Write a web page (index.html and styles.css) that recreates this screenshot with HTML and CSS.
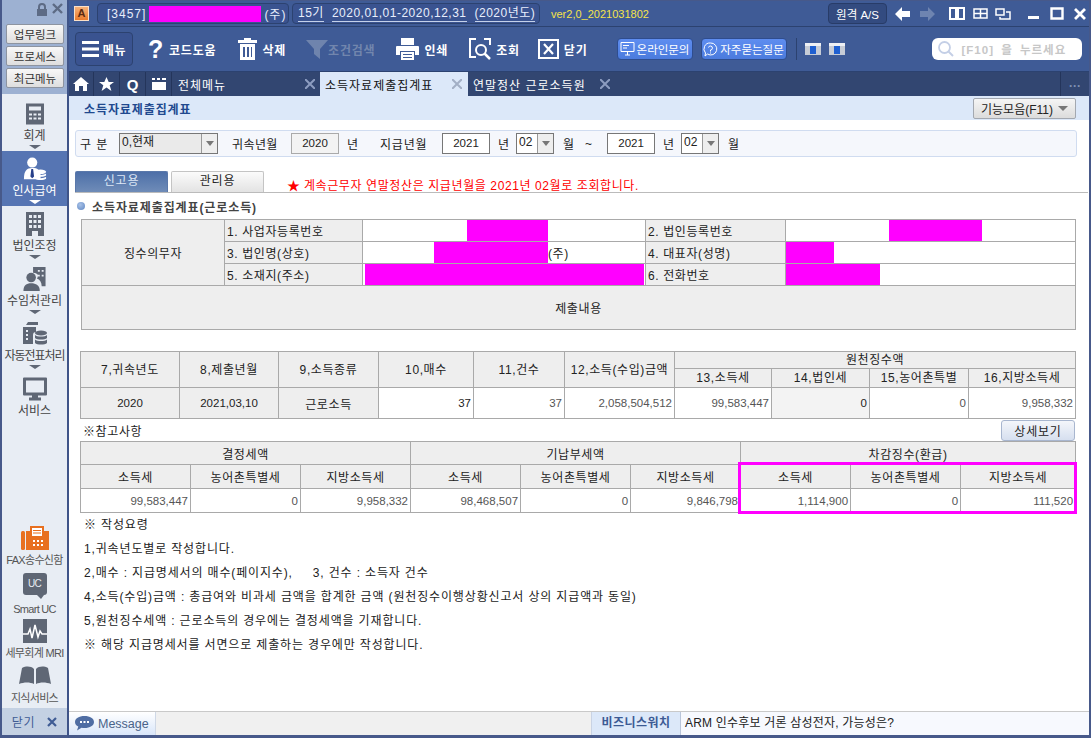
FILE: index.html
```html
<!DOCTYPE html>
<html lang="ko">
<head>
<meta charset="utf-8">
<title>소득자료제출집계표</title>
<link rel="stylesheet" href="styles.css">
</head>
<body>
<div class="app">
  <aside class="side">
    <div class="side-top">
      <div class="lockrow">
        <svg width="12" height="13" viewBox="0 0 12 13"><path d="M3 6V4a3 3 0 0 1 6 0v2" fill="none" stroke="#5d6b85" stroke-width="2"/><rect x="1" y="6" width="10" height="7" fill="#5d6b85"/></svg>
        <svg width="11" height="11" viewBox="0 0 11 11"><path d="M1 1l9 9M10 1l-9 9" stroke="#5d6b85" stroke-width="2.4"/></svg>
      </div>
      <button class="sbtn">업무링크</button>
      <button class="sbtn">프로세스</button>
      <button class="sbtn">최근메뉴</button>
    </div>
    <nav class="snav">
      <div class="sitem">
        <svg width="18" height="21" viewBox="0 0 18 21"><path fill="#5f6775" fill-rule="evenodd" d="M0 0h18v21H0zM3 3v4h12V3zM3 10v2h3v-2zm4.500 0v2h3v-2zm4.500 0v2h3v-2zM3 14v2h3v-2zm4.500 0v2h3v-2zm4.500 0v2h3v-2z"/></svg>
        <span>회계</span><i class="arr"></i>
      </div>
      <div class="sitem on">
        <svg width="24" height="26" viewBox="0 0 24 26"><circle cx="9" cy="6" r="5.500" fill="#fff"/><path d="M0 24c0-9 3-12 9-12s8 2 9 6v6z" fill="#fff"/><path d="M8 13h2l1 8-2 2-2-2z" fill="#27408a"/><ellipse cx="18" cy="16" rx="6" ry="2.500" fill="#fff"/><path d="M12 18c2 2 10 2 12 0v2c-2 2-10 2-12 0zm0 3.500c2 2 10 2 12 0v2c-2 2-10 2-12 0z" fill="#fff"/></svg>
        <span>인사급여</span><i class="arr"></i>
      </div>
      <div class="sitem">
        <svg width="18" height="24" viewBox="0 0 18 24"><path fill="#5f6775" fill-rule="evenodd" d="M0 0h18v24h-6v-5H6v5H0zM3 3v3h3V3zm4.500 0v3h3V3zM12 3v3h3V3zM3 8v3h3V8zm4.500 0v3h3V8zM12 8v3h3V8zM3 13v3h3v-3zm4.500 0v3h3v-3zm4.500 0v3h3v-3z"/></svg>
        <span>법인조정</span><i class="arr"></i>
      </div>
      <div class="sitem">
        <svg width="23" height="25" viewBox="0 0 23 25"><path fill="#5f6775" fill-rule="evenodd" d="M10 0h13v20h-4c0-4-2-7-5-8 1-1 1-3 1-4-1-1-3-2-5-2zM15 3v2h2V3zm4 0v2h2V3zM15 8v2h2V8zm4 0v2h2V8z"/><circle cx="8" cy="11" r="5" fill="#5f6775"/><path d="M0 25c0-6 3-8 8-8s9 2 9 8z" fill="#5f6775"/></svg>
        <span>수임처관리</span><i class="arr"></i>
      </div>
      <div class="sitem wide">
        <svg width="24" height="24" viewBox="0 0 24 24"><path fill="#5f6775" d="M3 3h12V0H5zM0 5h13v5c-2 0-3 1-3 3v9H0z"/><path fill="#e8edf4" d="M3 8h2v2H3zm0 4h2v2H3zm0 4h2v2H3z"/><ellipse cx="18" cy="11" rx="6" ry="2.500" fill="#5f6775"/><path fill="#5f6775" d="M12 13c2 2 10 2 12 0v3c-2 2-10 2-12 0zm0 4.500c2 2 10 2 12 0V21c-2 2-10 2-12 0z"/></svg>
        <span>자동전표처리</span><i class="arr"></i>
      </div>
      <div class="sitem">
        <svg width="24" height="23" viewBox="0 0 24 23"><path fill="#5f6775" fill-rule="evenodd" d="M1 0h22a1 1 0 0 1 1 1v16a1 1 0 0 1-1 1h-8v2h3v3H6v-3h3v-2H1a1 1 0 0 1-1-1V1a1 1 0 0 1 1-1zm2 3v12h18V3z"/></svg>
        <span>서비스</span>
      </div>
    </nav>
    <div class="sbottom">
      <div class="bitem fax">
        <svg width="28" height="24" viewBox="0 0 28 24"><rect y="5" width="4" height="19" rx="1.500" fill="#e8701f"/><path fill="#e8701f" d="M5 5h4V0h14v5h5v19H5z"/><path fill="#fff" d="M11 2h10v8H11zM12 14h2v2h-2zm4 0h2v2h-2zm4 0h2v2h-2zM12 18h2v2h-2zm4 0h2v2h-2zm4 0h2v2h-2z"/><path stroke="#e8701f" d="M12 4.500h8M12 7h8"/></svg>
        <span>FAX송수신함</span>
      </div>
      <div class="bitem uc">
        <div class="ucbox">UC</div>
        <span>Smart UC</span>
      </div>
      <div class="bitem mri">
        <svg width="24" height="24" viewBox="0 0 24 24"><rect width="24" height="24" fill="#5f6775"/><path d="M0 15h5l2-5 2 9 3-13 3 12 2-6 2 3h5" fill="none" stroke="#fff" stroke-width="1.500"/></svg>
        <span>세무회계 MRI</span>
      </div>
      <div class="bitem book">
        <svg width="32" height="18" viewBox="0 0 32 18"><path fill="#5f6775" d="M3 2c4-2 9-2 12 1v15c-4-2-10-2-15 0zM29 2c-4-2-9-2-12 1v15c4-2 10-2 15 0z"/></svg>
        <span>지식서비스</span>
      </div>
    </div>
    <div class="sclose"><span>닫기</span><svg width="10" height="10" viewBox="0 0 10 10"><path d="M1 1l8 8M9 1l-8 8" stroke="#3f5c94" stroke-width="2.200"/></svg></div>
  </aside>

  <main class="win">
    <header class="titlebar">
      <div class="logo">A</div>
      <div class="pill company"><span>[3457]</span><i class="mask m-co"></i><span>(주)</span></div>
      <div class="pill period"><span>15기</span><span>2020,01,01-2020,12,31</span><span>(2020년도)</span></div>
      <span class="ver">ver2,0_2021031802</span>
      <div class="tright">
        <button class="as">원격 A/S</button>
        <svg class="wi w-back" width="15" height="14" viewBox="0 0 15 14"><path fill="#fff" d="M0 7l7-7v4h8v6H7v4z"/></svg>
        <svg class="wi w-next" width="15" height="14" viewBox="0 0 15 14"><path fill="#6e84b0" d="M15 7L8 0v4H0v6h8v4z"/></svg>
        <svg class="wi w-book" width="16" height="13" viewBox="0 0 16 13"><path fill="none" stroke="#fff" stroke-width="2" d="M1 1h6v11H1zM9 1h6v11H9z"/></svg>
        <svg class="wi w-grid" width="15" height="11" viewBox="0 0 15 11"><path fill="none" stroke="#fff" stroke-width="1.500" d="M1 1h13v9H1zM1 5.500h13M7.500 1v9"/></svg>
        <svg class="wi w-rect" width="16" height="12" viewBox="0 0 16 12"><path fill="none" stroke="#fff" stroke-width="1.500" d="M1 1h8v6H1zM11 4h4v7H5V9"/></svg>
        <svg class="wi w-min" width="13" height="13" viewBox="0 0 13 13"><path fill="#fff" d="M1 9h11v3H1z"/></svg>
        <svg class="wi w-max" width="14" height="13" viewBox="0 0 14 13"><path fill="none" stroke="#fff" stroke-width="2.400" d="M1.500 1.500h11v10h-11z"/></svg>
        <svg class="wi w-x" width="12" height="12" viewBox="0 0 12 12"><path stroke="#fff" stroke-width="2.800" d="M1 1l10 10M11 1L1 11"/></svg>
      </div>
    </header>

    <div class="toolbar">
      <button class="tmenu">
        <svg width="17" height="16" viewBox="0 0 17 16"><path fill="#fff" d="M0 0h17v3H0zM0 6.500h17v3H0zM0 13h17v3H0z"/></svg>
        <b>메뉴</b>
      </button>
      <div class="ti t-code"><span class="q">?</span><b>코드도움</b></div>
      <div class="ti t-del">
        <svg width="19" height="22" viewBox="0 0 19 22"><path fill="#fff" fill-rule="evenodd" d="M6 0h7v2h6v3H0V2h6zM2 6h15v16H2zm3 3v10h2V9zm4 0v10h2V9zm4 0v10h1V9z"/></svg>
        <b>삭제</b>
      </div>
      <div class="ti t-find off">
        <svg width="22" height="19" viewBox="0 0 22 19"><path fill="#6f84ad" d="M0 0h22l-8 9v10l-6-5V9z"/></svg>
        <b>조건검색</b>
      </div>
      <div class="ti t-print">
        <svg width="23" height="22" viewBox="0 0 23 22"><path fill="#fff" fill-rule="evenodd" d="M5 0h13v7H5zM1 8h21a1 1 0 0 1 1 1v8h-4v-4H4v4H0V9a1 1 0 0 1 1-1zM5 14h13v8H5zm2 2v1h9v-1zm0 3v1h9v-1z"/></svg>
        <b>인쇄</b>
      </div>
      <div class="ti t-view">
        <svg width="22" height="22" viewBox="0 0 22 22"><path fill="none" stroke="#fff" stroke-width="2" d="M7 1H1v18h6M15 1h6v6"/><circle cx="12" cy="12" r="5" fill="none" stroke="#fff" stroke-width="2"/><path stroke="#fff" stroke-width="2.500" d="M15.500 15.500L21 21"/></svg>
        <b>조회</b>
      </div>
      <div class="ti t-close">
        <svg width="21" height="20" viewBox="0 0 21 20"><path fill="none" stroke="#fff" stroke-width="2" d="M1 1h19v18H1z"/><path stroke="#fff" stroke-width="2.200" d="M6 5l9 10M15 5L6 15"/></svg>
        <b>닫기</b>
      </div>
      <button class="bluebtn b-on">
        <svg width="15" height="14" viewBox="0 0 15 14"><path fill="none" stroke="#fff" d="M1 .5h13v9H1zM5 13h5M7.500 10v3M3 3.500h6M3 6h4"/></svg>온라인문의
      </button>
      <button class="bluebtn b-faq">
        <svg width="15" height="15" viewBox="0 0 15 15"><path fill="none" stroke="#fff" d="M7.500 1a6 6 0 1 1-3 11L2 14l.5-3a6 6 0 0 1 5-10z"/><path fill="none" stroke="#fff" d="M5.500 5.500a2 2 0 1 1 2 2.500v1.500M7.500 10.500v1"/></svg>자주묻는질문
      </button>
      <i class="vsep"></i>
      <div class="mini"><i></i></div>
      <div class="mini mini2"><i></i></div>
      <div class="search">
        <svg width="16" height="16" viewBox="0 0 16 16"><circle cx="6.500" cy="6.500" r="5.500" fill="none" stroke="#c4cfe6" stroke-width="1.800"/><path stroke="#c4cfe6" stroke-width="2" d="M10.500 10.500L15 15"/></svg>
        <span>[F10] 을 누르세요</span>
      </div>
    </div>

    <div class="tabbar">
      <div class="tico">
        <svg width="16" height="14" viewBox="0 0 16 14"><path fill="#fff" d="M8 0l8 7h-2v7h-4V9H6v5H2V7H0z"/></svg>
      </div>
      <div class="tico">
        <svg width="15" height="14" viewBox="0 0 15 14"><path fill="#fff" d="M7.500 0l2.200 5h5.300l-4.300 3.300 1.700 5.700-4.900-3.400L2.600 14l1.700-5.700L0 5h5.300z"/></svg>
      </div>
      <div class="tico q2">Q</div>
      <div class="tico">
        <svg width="14" height="12" viewBox="0 0 14 12"><path fill="#fff" d="M0 0h3v2H0zM5 0h3v2H5zM10 0h4v2h-4zM0 4h14v8H0z"/></svg>
      </div>
      <div class="tab t1"><span>전체메뉴</span><svg width="10" height="10" viewBox="0 0 10 10"><path stroke="#8c9cc0" stroke-width="2" d="M0 0l10 10M10 0L0 10"/></svg></div>
      <div class="tab t2"><span>소득자료제출집계표</span><svg width="10" height="10" viewBox="0 0 10 10"><path stroke="#a3afc5" stroke-width="2" d="M0 0l10 10M10 0L0 10"/></svg></div>
      <div class="tab t3"><span>연말정산 근로소득원</span><svg width="10" height="10" viewBox="0 0 10 10"><path stroke="#8c9cc0" stroke-width="2" d="M0 0l10 10M10 0L0 10"/></svg></div>
      <div class="tabmore">...</div>
    </div>

    <div class="pagehead">
      <h1>소득자료제출집계표</h1>
      <button class="fn">기능모음(F11)<i class="tri"></i></button>
    </div>

    <section class="body">
      <div class="filter">
        <span class="f-a">구 분</span>
        <div class="sel s-big grey"><span>0,현재</span><em><i class="tri"></i></em></div>
        <span class="f-b">귀속년월</span>
        <div class="inp grey">2020</div>
        <span class="f-c">년</span>
        <span class="f-d">지급년월</span>
        <div class="inp">2021</div>
        <span class="f-c">년</span>
        <div class="sel s-sm"><span>02</span><em><i class="tri"></i></em></div>
        <span class="f-e">월</span>
        <span class="f-f">~</span>
        <div class="inp i-2">2021</div>
        <span class="f-c">년</span>
        <div class="sel s-sm s-3"><span>02</span><em><i class="tri"></i></em></div>
        <span class="f-e">월</span>
      </div>

      <div class="subtabs">
        <div class="st act">신고용</div>
        <div class="st">관리용</div>
        <p class="notice"><span class="star">★</span> 계속근무자 연말정산은 지급년월을 2021년 02월로 조회합니다.</p>
      </div>

      <h2 class="sec"><i class="dot"></i>소득자료제출집계표(근로소득)</h2>

      <table class="grid info">
        <colgroup><col class="c143"><col class="c138"><col class="c283"><col class="c140"><col class="c290"></colgroup>
        <tr>
          <th rowspan="3" class="ctr">징수의무자</th>
          <th>1. 사업자등록번호</th><td><i class="mask m1"></i></td>
          <th>2. 법인등록번호</th><td><i class="mask m2"></i></td>
        </tr>
        <tr>
          <th>3. 법인명(상호)</th><td><div class="cellrow"><i class="mask m3"></i><span>(주)</span></div></td>
          <th>4. 대표자(성명)</th><td><i class="mask m4"></i></td>
        </tr>
        <tr>
          <th>5. 소재지(주소)</th><td><i class="mask m5"></i></td>
          <th>6. 전화번호</th><td><i class="mask m6"></i></td>
        </tr>
        <tr class="tall"><th colspan="5" class="ctr">제출내용</th></tr>
      </table>

      <table class="grid sum">
        <colgroup><col class="c99"><col class="c99"><col class="c100"><col class="c95"><col class="c91"><col class="c110"><col class="c97"><col class="c98"><col class="c99"><col class="c107"></colgroup>
        <tr class="r17">
          <th rowspan="2" class="ctr">7,귀속년도</th>
          <th rowspan="2" class="ctr">8,제출년월</th>
          <th rowspan="2" class="ctr">9,소득종류</th>
          <th rowspan="2" class="ctr">10,매수</th>
          <th rowspan="2" class="ctr">11,건수</th>
          <th rowspan="2" class="ctr">12,소득(수입)금액</th>
          <th colspan="4" class="ctr">원천징수액</th>
        </tr>
        <tr class="r19">
          <th class="ctr">13,소득세</th>
          <th class="ctr">14,법인세</th>
          <th class="ctr">15,농어촌특별</th>
          <th class="ctr">16,지방소득세</th>
        </tr>
        <tr class="r31">
          <th class="ctr num">2020</th>
          <th class="ctr num">2021,03,10</th>
          <th class="ctr">근로소득</th>
          <td class="val dark">37</td>
          <td class="val">37</td>
          <td class="val">2,058,504,512</td>
          <td class="val">99,583,447</td>
          <td class="val dark shade">0</td>
          <td class="val">0</td>
          <td class="val">9,958,332</td>
        </tr>
      </table>

      <div class="refrow">
        <span>※참고사항</span>
        <button class="detail">상세보기</button>
      </div>

      <div class="taxwrap">
        <table class="grid tax">
          <colgroup><col class="c110"><col class="c110"><col class="c110"><col class="c110"><col class="c110"><col class="c110"><col class="c110"><col class="c110"><col class="c115"></colgroup>
          <tr class="r23">
            <th colspan="3" class="ctr">결정세액</th>
            <th colspan="3" class="ctr">기납부세액</th>
            <th colspan="3" class="ctr">차감징수(환급)</th>
          </tr>
          <tr>
            <th class="ctr">소득세</th><th class="ctr">농어촌특별세</th><th class="ctr">지방소득세</th>
            <th class="ctr">소득세</th><th class="ctr">농어촌특별세</th><th class="ctr">지방소득세</th>
            <th class="ctr">소득세</th><th class="ctr">농어촌특별세</th><th class="ctr">지방소득세</th>
          </tr>
          <tr>
            <td class="val">99,583,447</td><td class="val">0</td><td class="val">9,958,332</td>
            <td class="val">98,468,507</td><td class="val">0</td><td class="val">9,846,798</td>
            <td class="val">1,114,900</td><td class="val">0</td><td class="val">111,520</td>
          </tr>
        </table>
        <div class="hilite"></div>
      </div>

      <ul class="notes">
        <li>※ 작성요령</li>
        <li>1,귀속년도별로 작성합니다.</li>
        <li>2,매수 : 지급명세서의 매수(페이지수),<span class="gap">3, 건수 : 소득자 건수</span></li>
        <li>4,소득(수입)금액 : 총급여와 비과세 금액을 합계한 금액 (원천징수이행상황신고서 상의 지급액과 동일)</li>
        <li>5,원천징수세액 : 근로소득의 경우에는 결정세액을 기재합니다.</li>
        <li>※ 해당 지급명세서를 서면으로 제출하는 경우에만 작성합니다.</li>
      </ul>
    </section>

    <footer class="status">
      <div class="msg">
        <svg width="19" height="15" viewBox="0 0 19 15"><path fill="#4f6da3" d="M9.500 0C15 0 19 2.500 19 6s-4 6-9.500 6c-1 0-2 0-3-.2L2 14.500l1.300-4C1.200 9.500 0 8 0 6c0-3.500 4-6 9.500-6z"/><path fill="#fff" d="M5 5h2v2H5zm3.500 0h2v2h-2zM12 5h2v2h-2z"/></svg>
        <span>Message</span>
      </div>
      <div class="sempty"></div>
      <div class="bw">비즈니스워치</div>
      <div class="news">ARM 인수후보 거론 삼성전자, 가능성은?</div>
    </footer>
  </main>
</div>
</body>
</html>
```

FILE: styles.css
```css
* { box-sizing: border-box; }
html, body { margin: 0; padding: 0; }
body {
  width: 1091px; height: 738px; overflow: hidden; background: #fff;
  font-family: "Liberation Sans", "Noto Sans CJK KR", sans-serif;
  font-size: 12px; color: #222; letter-spacing: .6px;
}
button { font-family: inherit; letter-spacing: inherit; padding: 0; cursor: default; }
h1, h2, p, ul { margin: 0; padding: 0; }
i, em { font-style: normal; display: block; }
.app { display: flex; width: 1091px; height: 738px; }

/* sidebar */
.side {
  width: 69px; flex: none; display: flex; flex-direction: column;
  background: #e8edf4; border-left: 2px solid #47598a; border-right: 2px solid #3f5488;
  border-bottom: 3px solid #47598a;
}
.side-top {
  height: 94px; background: #9db1d2; padding: 3px 0 0 4px; display: flex; flex-direction: column;
}
.lockrow { display: flex; gap: 4px; justify-content: flex-end; padding-right: 4px; height: 21px; align-items: flex-start; }
.sbtn {
  width: 58px; height: 20px; margin-bottom: 2px; background: linear-gradient(#f8f8f8, #dedede);
  border: 1px solid #8d94a0; border-radius: 2px; font-size: 11.500px; letter-spacing: 0; color: #333;
}
.snav { display: flex; flex-direction: column; padding-top: 2px; }
.sitem {
  height: 55px; display: flex; flex-direction: column; align-items: center; padding-top: 6px;
  font-size: 12px; letter-spacing: 0; color: #444; white-space: nowrap;
}
.sitem svg { flex: none; height: 24px; }
.sitem span { line-height: 16px; margin-top: 2px; }
.wide span { letter-spacing: -1px; }
.sitem.on { background: #5675b3; color: #fff; }
.arr { width: 0; height: 0; margin-top: 1px; border-left: 6px solid transparent; border-right: 6px solid transparent; border-top: 4px solid #5f6775; }
.on .arr { border-top-color: #fff; }
.sbottom { margin-top: auto; display: flex; flex-direction: column; }
.bitem { display: flex; flex-direction: column; align-items: center; font-size: 11px; letter-spacing: -.7px; color: #555; white-space: nowrap; }
.bitem span { line-height: 16px; }
.fax { height: 47px; }
.uc { height: 46px; }
.mri { height: 47px; }
.book { height: 42px; gap: 6px; }
.fax span, .mri span { margin-top: 2px; }
.ucbox {
  width: 24px; height: 22px; background: #5f6775; border-radius: 3px; color: #e8edf4;
  font-size: 10px; line-height: 22px; text-align: center; margin-bottom: 6px; position: relative;
}
.ucbox::after { content: ""; position: absolute; left: 14px; top: 22px; border-top: 4px solid #5f6775; border-left: 4px solid transparent; border-right: 3px solid transparent; }
.sclose {
  height: 27px; background: #c4d1e3; display: flex; align-items: center; justify-content: center; gap: 12px;
  color: #3f5c94; font-size: 12px;
}

/* window */
.win { flex: 1; min-width: 0; display: flex; flex-direction: column; border-right: 2px solid #47598a; border-bottom: 3px solid #47598a; }
.titlebar {
  height: 27px; flex: none; background: #3f5b96; border-bottom: 1px solid #2c4270; border-top: 1px solid #47598a;
  display: flex; align-items: center; padding-left: 5px; color: #e8eefc;
}
.logo {
  width: 15px; height: 15px; background: linear-gradient(#f7b27a, #ea7b2c); color: #5a2a10; border: 1px solid #fbe0c8;
  font-size: 11px; line-height: 13px; text-align: center; font-weight: 700; letter-spacing: 0;
}
.pill {
  height: 21px; border: 1px solid #2c4270; border-radius: 4px; background: #3a5390; display: flex; align-items: center;
  font-size: 12px; letter-spacing: 1px; white-space: nowrap; flex: none;
}
.company { margin-left: 8px; width: 192px; padding-left: 9px; gap: 3px; }
.mask { background: #ff00ff; display: block; }
.m-co { width: 112px; height: 16px; }
.period { margin-left: 3px; width: 248px; padding-left: 5px; gap: 8px; letter-spacing: .5px; }
.period span { border-bottom: 1px solid #c4d1ea; line-height: 15px; }
.ver { margin-left: 11px; color: #f5e34a; font-size: 11px; letter-spacing: 0; white-space: nowrap; }
.tright { margin-left: auto; display: flex; align-items: center; padding-right: 3px; }
.as {
  width: 59px; height: 21px; background: #334b80; color: #fff; border: 1px solid #283c68; border-radius: 4px;
  font-size: 11.500px; letter-spacing: 0;
}
.wi { flex: none; }
.w-back { margin-left: 8px; }
.w-next { margin-left: 10px; }
.w-book { margin-left: 14px; }
.w-grid { margin-left: 8px; }
.w-rect { margin-left: 7px; }
.w-min { margin-left: 16px; }
.w-max { margin-left: 10px; }
.w-x { margin-left: 10px; }

.toolbar {
  height: 45px; flex: none; background: #3f5b96; border-bottom: 1px solid #2c4270; display: flex; align-items: center; color: #fff;
}
.toolbar b { font-size: 12px; letter-spacing: .8px; font-weight: 700; color: #fff; white-space: nowrap; }
.tmenu {
  margin-left: 6px; width: 58px; height: 34px; background: #3a5390; border: 1px solid #2c4270; border-radius: 4px;
  display: flex; align-items: center; justify-content: center; gap: 4px; color: #fff;
}
.ti { display: flex; align-items: center; gap: 5px; flex: none; }
.t-code { margin-left: 15px; }
.q { font-size: 25px; font-weight: 700; line-height: 26px; color: #fff; width: 16px; }
.t-del { margin-left: 22px; }
.t-find { margin-left: 20px; gap: 0; }
.off b { color: #7286ad; }
.t-print { margin-left: 21px; }
.t-view { margin-left: 21px; }
.t-close { margin-left: 18px; }
.bluebtn {
  height: 22px; background: linear-gradient(#5e8df0, #4b7bdd); color: #fff; border: 1px solid #2f4d8e; border-radius: 4px;
  font-size: 11.500px; letter-spacing: 0; display: flex; align-items: center; justify-content: center; gap: 2px; white-space: nowrap;
}
.b-on { margin-left: 29px; width: 76px; }
.b-faq { margin-left: 8px; width: 86px; }
.vsep { width: 1px; height: 22px; background: #2c4270; margin-left: 9px; }
.mini { width: 16px; height: 12px; background: linear-gradient(#eef0f4 25%, #c7ccd6 25%); margin-left: 8px; padding: 3px 5px 1px 5px; }
.mini2 { margin-left: 8px; }
.mini i { width: 6px; height: 8px; background: #1f5fd0; }
.search {
  margin-left: 87px; width: 150px; height: 22px; background: #fff; border-radius: 6px; display: flex; align-items: center; gap: 8px; padding-left: 6px;
  color: #c7c7c7; font-size: 11.500px; font-weight: 700; letter-spacing: 1px; word-spacing: 3px; white-space: nowrap;
}

.tabbar { height: 24px; flex: none; background: #324671; display: flex; align-items: stretch; color: #fff; }
.tico { width: 26px; display: flex; align-items: center; justify-content: center; border-right: 1px solid #24355b; }
.tico:first-child { width: 25px; }
.q2 { font-size: 15px; font-weight: 700; letter-spacing: 0; }
.tab { display: flex; align-items: center; justify-content: space-between; flex: none; white-space: nowrap; letter-spacing: 1px; }
.t1 { width: 148px; padding: 0 5px 0 6px; }
.t2 { width: 148px; background: #dce8f9; color: #111; padding: 0 6px 0 5px; }
.t3 { width: 142px; padding: 0 0 0 5px; }
.tabmore {
  margin-left: auto; width: 29px; border-left: 1px solid #24355b; color: #7f90b4; text-align: center; font-size: 12px; line-height: 22px; font-weight: 700;
}

.pagehead {
  height: 24px; flex: none; background: #dce8f9; display: flex; align-items: center; justify-content: space-between;
  padding: 0 13px 0 15px;
}
.pagehead h1 { font-size: 12px; color: #21498f; letter-spacing: .9px; font-weight: 700; }
.fn {
  width: 103px; height: 21px; background: linear-gradient(#f5f5f5, #dcdcdc); border: 1px solid #a3a8b0; border-radius: 2px;
  font-size: 12px; letter-spacing: 0; display: flex; align-items: center; justify-content: center; gap: 5px; color: #222;
}
.tri { width: 0; height: 0; border-left: 4px solid transparent; border-right: 4px solid transparent; border-top: 5px solid #777; }
.fn .tri { border-left-width: 5px; border-right-width: 5px; }

.body { flex: 1; min-height: 0; padding: 10px 0 0 6px; background: #fff; overflow: hidden; }
.filter {
  width: 1002px; height: 27px; background: #f5f7fc; border: 1px solid #d0dcf0; border-radius: 3px; display: flex; align-items: center; padding-left: 4px;
  white-space: nowrap; letter-spacing: 1px;
}
.f-a { width: 39px; }
.sel { height: 21px; border: 1px solid #777; display: flex; background: #fff; font-size: 12px; letter-spacing: 0; padding-left: 2px; justify-content: space-between; line-height: 17px; }
.sel em { width: 16px; background: #eee; border-left: 1px solid #999; display: flex; align-items: center; justify-content: center; }
.s-big { width: 99px; }
.s-big.grey { background: #eaeaea; }
.s-sm { width: 38px; margin-left: 7px; }
.s-3 { margin-left: 7px; }
.inp { width: 48px; height: 21px; border: 1px solid #777; text-align: center; line-height: 19px; font-size: 11.500px; letter-spacing: 0; margin-left: 10px; background: #fff; }
.inp.grey { background: #f3f3f3; border-color: #aaa; margin-left: 9px; }
.f-b { margin-left: 14px; width: 50px; letter-spacing: .4px; }
.f-c { margin-left: 8px; width: 11px; }
.f-d { margin-left: 22px; width: 52px; letter-spacing: .8px; }
.f-e { margin-left: 9px; }
.f-f { margin-left: 10px; }
.i-2 { margin-left: 14px; }
.subtabs { display: flex; align-items: flex-end; height: 22px; margin-top: 14px; width: 1013px; border-bottom: 1px solid #bbb; }
.st {
  width: 93px; height: 21px; border: 1px solid #c4c4c4; border-bottom: 0; background: linear-gradient(#fbfbfb, #e3e3e3); text-align: center; line-height: 19px; border-radius: 2px 2px 0 0;
  margin-right: 3px; letter-spacing: .8px;
}
.st.act { background: linear-gradient(#4d6fa8, #6f8cb8); color: #dfe8f6; border-color: #5a78aa; }
.notice { color: #f00; margin-left: 20px; letter-spacing: .6px; align-self: center; padding-top: 6px; white-space: nowrap; }
.star { font-size: 13px; letter-spacing: 0; }
.sec { font-size: 12px; font-weight: 700; color: #444; letter-spacing: .9px; display: flex; align-items: center; gap: 7px; height: 26px; padding-left: 2px; }
.dot { width: 8px; height: 8px; border-radius: 50%; background: radial-gradient(circle at 40% 35%, #a8c2e8, #5f86c2); }

.grid { border-collapse: collapse; table-layout: fixed; }
.grid th, .grid td { border: 1px solid #a9a9a9; padding: 0; font-weight: 400; overflow: hidden; white-space: nowrap; }
.grid th { background: #eee; color: #222; text-align: left; padding-left: 2px; }
.grid th.ctr { text-align: center; padding-left: 0; }
.c143 { width: 143px; } .c138 { width: 138px; } .c283 { width: 283px; } .c140 { width: 140px; } .c290 { width: 290px; }
.c99 { width: 99px; } .c100 { width: 100px; } .c95 { width: 95px; } .c91 { width: 91px; } .c110 { width: 110px; } .c97 { width: 97px; } .c98 { width: 98px; } .c107 { width: 107px; } .c115 { width: 115px; }
.info { width: 994px; margin-left: 6px; }
.info tr { height: 22px; }
.info tr.tall { height: 44px; }
.info .mask { height: 21px; }
.m1 { width: 81px; margin-left: 104px; }
.m2 { width: 93px; margin-left: 103px; }
.m3 { width: 114px; margin-left: 71px; }
.m4 { width: 48px; }
.m5 { width: 279px; margin-left: 2px; }
.m6 { width: 94px; }
.cellrow { display: flex; align-items: center; }
.sum { width: 995px; margin: 21px 0 0 5px; }
.r17 { height: 17px; } .r19 { height: 19px; } .r31 { height: 31px; }
.r17 th, .r19 th { line-height: 14px; }
.val { text-align: right; padding-right: 2px !important; font-size: 11.500px; letter-spacing: 0; color: #555; }
.dark { color: #222; }
.shade { background: #f3f3f3; }
.num { font-size: 11.500px; letter-spacing: 0; }
.refrow { width: 1000px; height: 22px; display: flex; align-items: center; justify-content: space-between; padding-left: 8px; }
.detail {
  width: 74px; height: 21px; background: linear-gradient(#f4f6fa, #d6dfef); border: 1px solid #a8b6cf; border-radius: 3px; letter-spacing: .8px; color: #222; font-size: 12px;
}
.taxwrap { position: relative; width: 995px; margin-left: 5px; }
.tax { width: 995px; }
.tax tr { height: 24px; }
.tax tr.r23 { height: 23px; }
.hilite { position: absolute; left: 658px; top: 21px; width: 339px; height: 52px; border: 3px solid #ff00ff; }
.notes { list-style: none; padding: 0 0 0 9px; }
.notes li { height: 24px; line-height: 24px; white-space: nowrap; letter-spacing: .85px; }
.gap { margin-left: 20px; }

.status { height: 24px; flex: none; display: flex; border-top: 1px solid #c9c9c9; background: #f0f0f0; margin-top: auto; }
.msg {
  width: 87px; background: linear-gradient(#fff, #d9e6fa); display: flex; align-items: center; gap: 4px; padding-left: 6px; color: #4a6389; font-size: 12.500px; letter-spacing: 0; border-right: 1px solid #cfd8e6;
}
.sempty { width: 435px; }
.bw { width: 90px; background: #dce8f9; color: #3c5a94; font-weight: 700; text-align: center; line-height: 22px; border-left: 1px solid #c9d3e4; border-right: 1px solid #b9c5da; letter-spacing: .5px; }
.news { flex: 1; background: #f7f9fe; line-height: 22px; padding-left: 4px; letter-spacing: .2px; }
```
